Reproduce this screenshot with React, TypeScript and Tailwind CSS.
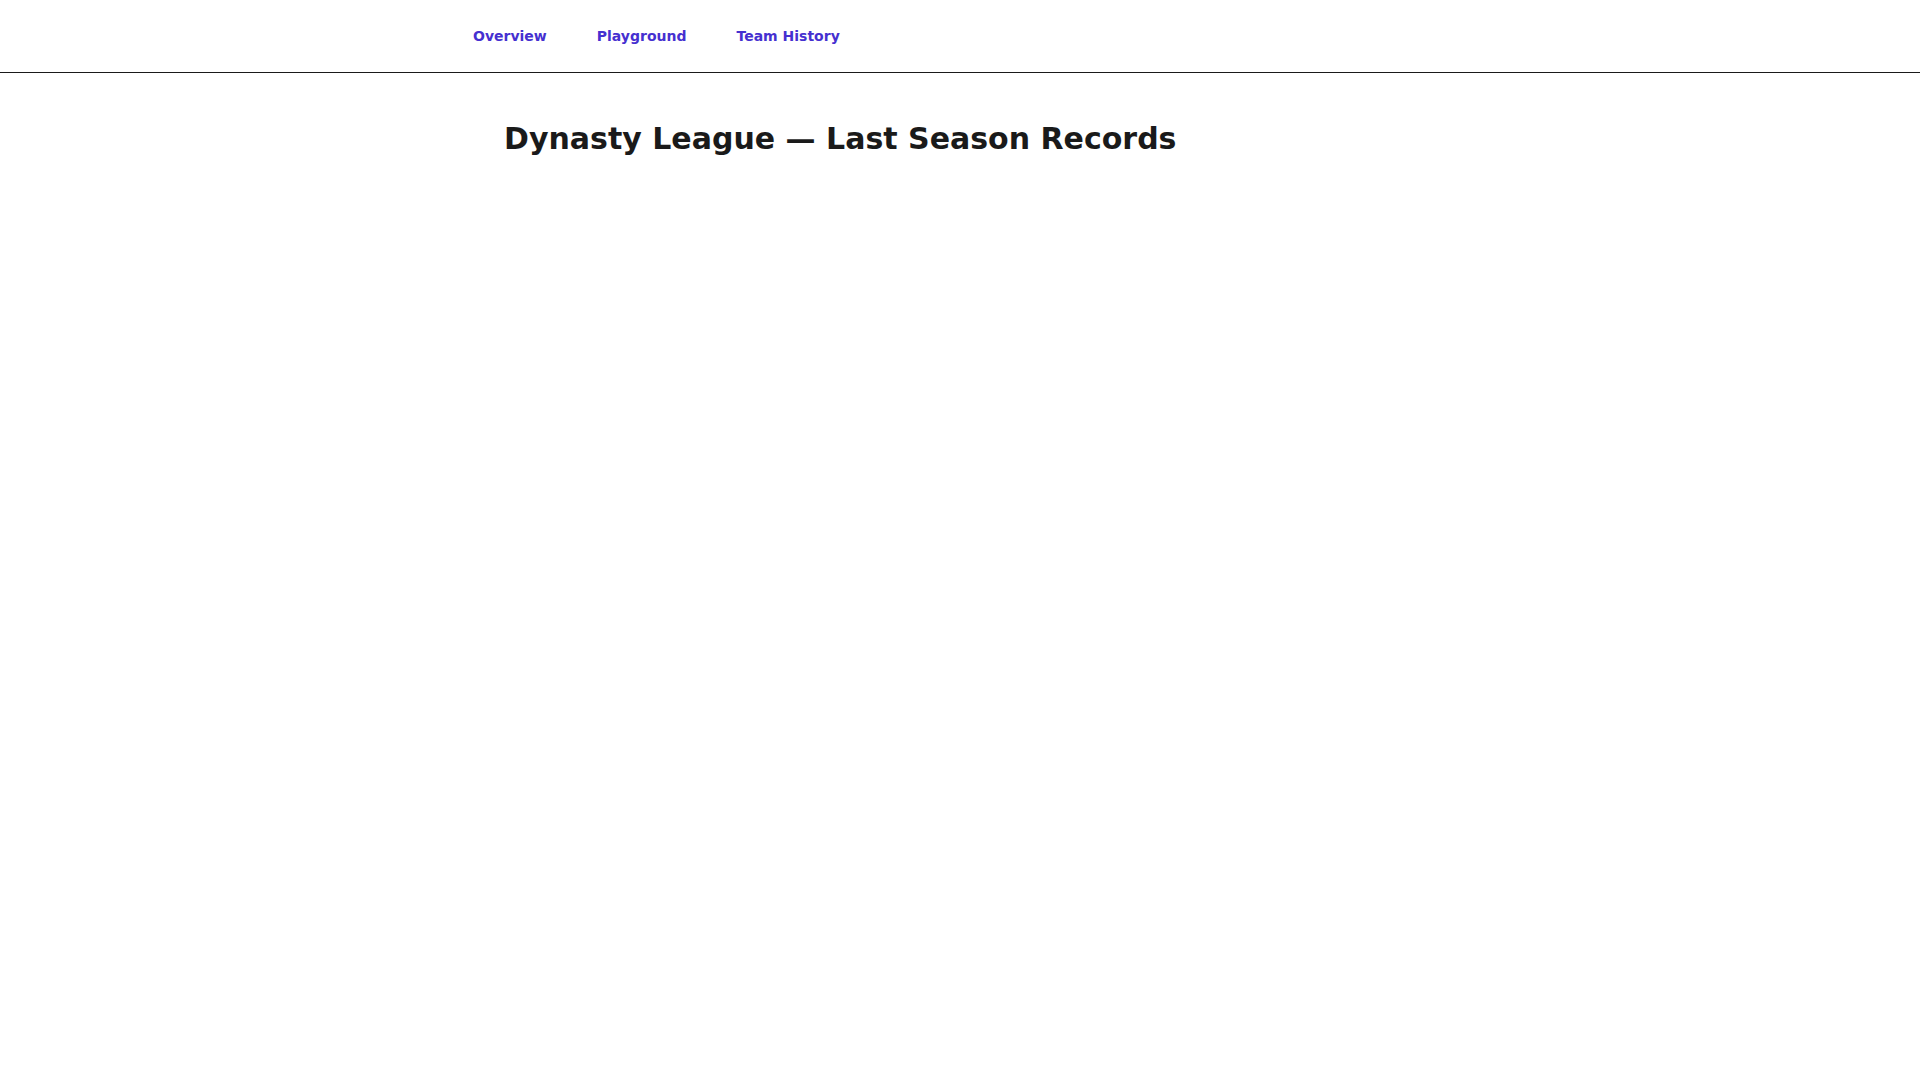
import React from 'react';

const links = ['Overview', 'Playground', 'Team History'];

function TopNav() {
  return (
    <header className="h-[73px] border-b border-[#1a1a1a] flex items-center">
      <nav className="flex items-center gap-[50px] pl-[473px]">
        {links.map((label) => (
          <a
            key={label}
            href="#"
            className="text-sm leading-5 font-bold text-[#4530d0] no-underline"
          >
            {label}
          </a>
        ))}
      </nav>
    </header>
  );
}

export default function App() {
  return (
    <div
      className="min-h-[1152px] bg-white"
      style={{ fontFamily: '"DejaVu Sans", sans-serif' }}
    >
      <TopNav />
      <main className="pl-[504px] pt-[48px]">
        <h1 className="text-[30px] leading-9 font-bold text-[#1a1a1a]">
          Dynasty League — Last Season Records
        </h1>
      </main>
    </div>
  );
}
